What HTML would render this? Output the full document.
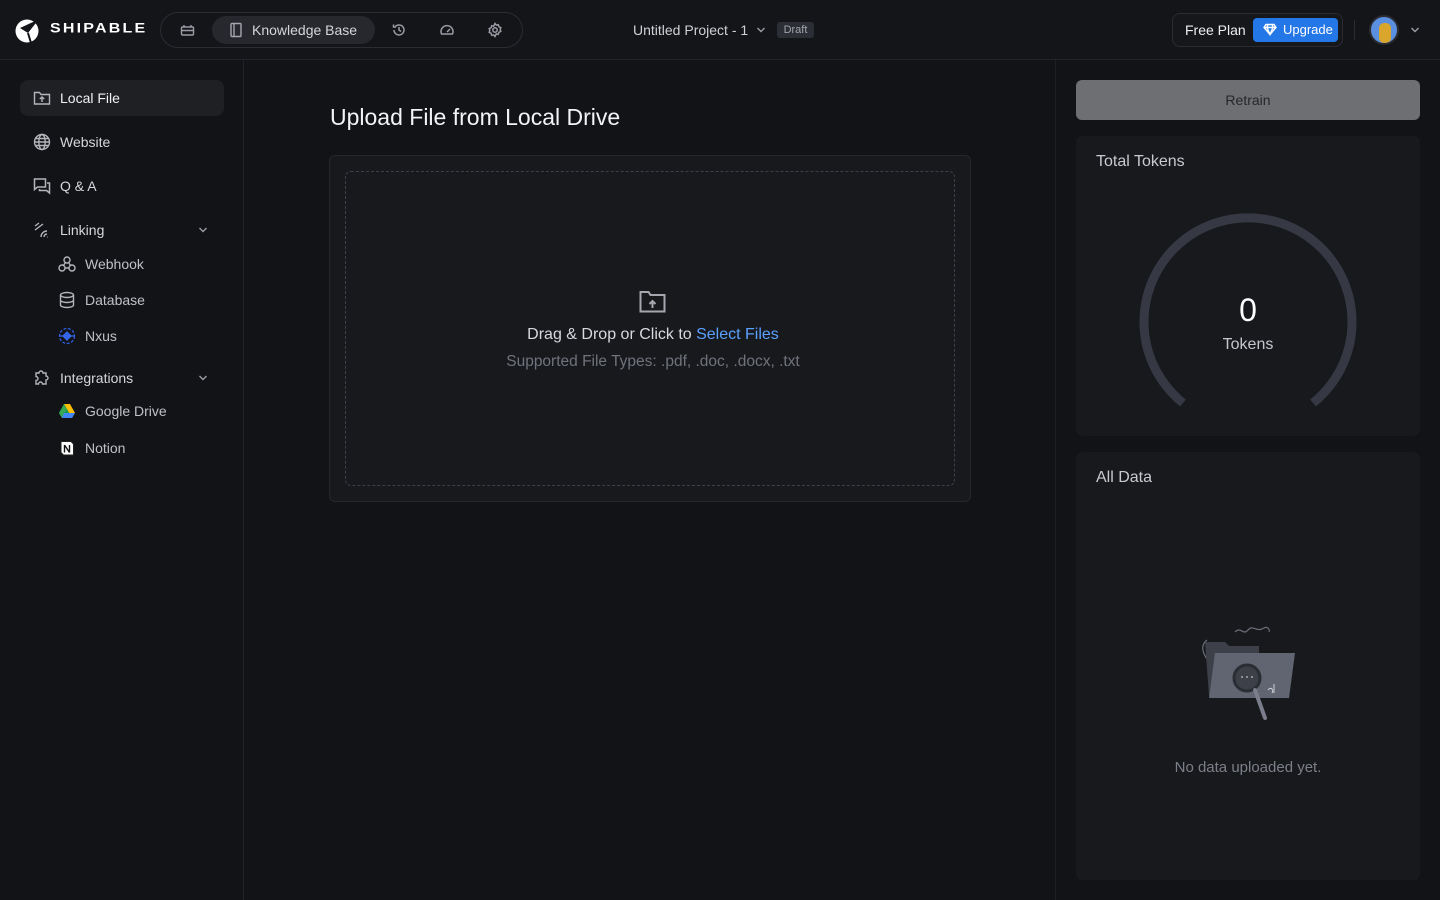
<!DOCTYPE html>
<html><head><meta charset="utf-8"><style>
*{box-sizing:border-box;margin:0;padding:0}
body{width:1440px;height:900px;background:#121316;font-family:"Liberation Sans",sans-serif;color:#e4e5e9;position:relative;overflow:hidden}
.abs{position:absolute}
.hdr{left:0;top:0;width:1440px;height:60px;border-bottom:1px solid #22242a;background:#141519}
.side{left:0;top:60px;width:244px;height:840px;border-right:1px solid #202227}
.right{left:1055px;top:60px;width:385px;height:840px;border-left:1px solid #1c1e22}
.nav{position:absolute;left:20px;width:204px;height:36px;border-radius:8px;display:flex;align-items:center;padding-left:13px;font-size:14px;color:#d6d7dc}
.nav svg{margin-right:9px}
.sub{position:absolute;left:58px;display:flex;align-items:center;font-size:14px;color:#bfc1c8}
.sub svg{margin-right:9px}
.chev{position:absolute;left:198px}
</style></head><body>
<div class="abs hdr"></div>
<svg class="abs" style="left:14px;top:16px" width="28" height="28" viewBox="0 0 28 28"><circle cx="13" cy="15" r="11.5" fill="#fff"/><path d="M6 12 L14 17 L25 3 L19 6 Z" fill="#141519"/><path d="M14 17 L17 27" stroke="#141519" stroke-width="2"/></svg>
<div class="abs" style="left:50px;top:20px;font-size:16px;font-weight:900;letter-spacing:2.2px;color:#fff;transform:scaleY(0.85);transform-origin:left center">SHIPABLE</div>
<div class="abs" style="left:160px;top:12px;width:363px;height:36px;border:1px solid #2a2c32;border-radius:18px"></div>
<svg class="abs" style="left:180px;top:23px" width="15" height="14" viewBox="0 0 15 14" fill="none" stroke="#9a9ca4" stroke-width="1.4"><rect x="1.5" y="4" width="12" height="8" rx="1"/><path d="M4 4V2M11 4V2M1.5 7.5h12"/></svg>
<div class="abs" style="left:212px;top:16px;width:163px;height:28px;background:#26282e;border-radius:14px"></div>
<svg class="abs" style="left:229px;top:22px" width="14" height="16" viewBox="0 0 14 16" fill="none" stroke="#a5a7ae" stroke-width="1.4"><rect x="2" y="1.5" width="10" height="13" rx="1"/><path d="M5 1.5v13"/></svg>
<div class="abs" style="left:252px;top:22px;font-size:14px;color:#d4d5da">Knowledge Base</div>
<svg class="abs" style="left:391px;top:22px" width="16" height="16" viewBox="0 0 16 16" fill="none" stroke="#9a9ca4" stroke-width="1.5"><path d="M3 8a5 5 0 1 0 1.5-3.6M2.5 2.5v2.5h2.5M8 5v3l2 1.5"/></svg>
<svg class="abs" style="left:439px;top:22px" width="16" height="16" viewBox="0 0 16 16" fill="none" stroke="#9a9ca4" stroke-width="1.5"><path d="M2.5 12a6 6 0 1 1 11 0z"/><path d="M8 10l3-3"/></svg>
<svg class="abs" style="left:487px;top:22px" width="16" height="16" viewBox="0 0 16 16" fill="none" stroke="#9a9ca4" stroke-width="1.5"><circle cx="8" cy="8" r="2.2"/><path d="M8 1.5l1.3 1.6 2-.4.6 2 1.9.9-.6 1.9.6 1.9-1.9.9-.6 2-2-.4L8 14.5l-1.3-1.6-2 .4-.6-2-1.9-.9.6-1.9-.6-1.9 1.9-.9.6-2 2 .4z"/></svg>
<div class="abs" style="left:633px;top:22px;font-size:14px;color:#d0d1d6">Untitled Project - 1</div>
<svg class="abs" style="left:756px;top:26px" width="10" height="8" viewBox="0 0 10 8" fill="none" stroke="#9a9ca4" stroke-width="1.4"><path d="M1.5 2l3.5 3.5L8.5 2"/></svg>
<div class="abs" style="left:777px;top:22px;width:37px;height:16px;background:#2c2e35;border-radius:3px;font-size:11px;color:#a2a4ac;text-align:center;line-height:16px">Draft</div>
<div class="abs" style="left:1172px;top:13px;width:171px;height:34px;border:1px solid #2a2c32;border-radius:8px;background:#16171b"></div>
<div class="abs" style="left:1185px;top:22px;font-size:14px;color:#eceef2">Free Plan</div>
<div class="abs" style="left:1253px;top:18px;width:85px;height:24px;background:#2477e6;border-radius:4px;color:#fff;font-size:13px;line-height:24px;padding-left:30px">Upgrade</div>
<svg class="abs" style="left:1263px;top:23px" width="14" height="13" viewBox="0 0 14 13" fill="none" stroke="#fff" stroke-width="1.4"><path d="M3 1.5h8l2 3-6 7-6-7zM1 4.5h12M5 1.5l-1 3 3 7 3-7-1-3"/></svg>
<div class="abs" style="left:1354px;top:20px;width:1px;height:20px;background:#2a2c32"></div>
<div class="abs" style="left:1369px;top:15px;width:30px;height:30px;border-radius:50%;background:#5b8fe0;border:2px solid #2a2c32;overflow:hidden"><div style="position:absolute;left:8px;top:6px;width:12px;height:20px;background:#d9a52a;border-radius:5px"></div></div>
<svg class="abs" style="left:1410px;top:26px" width="10" height="8" viewBox="0 0 10 8" fill="none" stroke="#9a9ca4" stroke-width="1.4"><path d="M1.5 2l3.5 3.5L8.5 2"/></svg>

<div class="abs side"></div>
<div class="nav" style="top:80px;background:#1e2024;color:#f0f1f4"><svg width="18" height="16" viewBox="0 0 18 16" fill="none" stroke="#b3b5bc" stroke-width="1.4"><path d="M1.5 2.5h5l1.5 2h8.5v9.5h-15z"/><path d="M9 12V7M6.8 9L9 7l2.2 2"/></svg>Local File</div>
<div class="nav" style="top:124px"><svg width="18" height="18" viewBox="0 0 18 18" fill="none" stroke="#b3b5bc" stroke-width="1.4"><circle cx="9" cy="9" r="7.5"/><ellipse cx="9" cy="9" rx="3.2" ry="7.5"/><path d="M1.5 9h15M2.5 5.5h13M2.5 12.5h13"/></svg>Website</div>
<div class="nav" style="top:168px"><svg width="18" height="18" viewBox="0 0 18 18" fill="none" stroke="#b3b5bc" stroke-width="1.5"><path d="M1.5 2h11v8h-8l-3 2.5z"/><path d="M14 6h2.5v10l-3-2.5h-7v-1.5"/></svg>Q &amp; A</div>
<div class="nav" style="top:212px"><svg width="18" height="18" viewBox="0 0 18 18" fill="none" stroke="#b3b5bc" stroke-width="1.4"><path d="M2 5l4-3M2 9l8-6M8 16a6 6 0 0 1 6-6M11 16a3 3 0 0 1 3-3M14 16h.5"/></svg>Linking</div>
<svg class="chev" style="top:226px" width="10" height="8" viewBox="0 0 10 8" fill="none" stroke="#9a9ca4" stroke-width="1.4"><path d="M1.5 2l3.5 3.5L8.5 2"/></svg>
<div class="sub" style="top:255px"><svg width="18" height="18" viewBox="0 0 18 18" fill="none" stroke="#b3b5bc" stroke-width="1.4"><circle cx="9" cy="5" r="3"/><circle cx="4" cy="13" r="3"/><circle cx="14" cy="13" r="3"/><path d="M7.5 7.5L5 11M10.5 7.5L13 11M7 13h4"/></svg>Webhook</div>
<div class="sub" style="top:291px"><svg width="18" height="18" viewBox="0 0 18 18" fill="none" stroke="#b3b5bc" stroke-width="1.4"><ellipse cx="9" cy="4" rx="6.5" ry="2.5"/><path d="M2.5 4v10c0 1.4 2.9 2.5 6.5 2.5s6.5-1.1 6.5-2.5V4M2.5 9c0 1.4 2.9 2.5 6.5 2.5s6.5-1.1 6.5-2.5"/></svg>Database</div>
<div class="sub" style="top:327px"><svg width="18" height="18" viewBox="0 0 18 18"><circle cx="9" cy="9" r="7.5" fill="none" stroke="#2f5de0" stroke-width="1.3" stroke-dasharray="3 1.5"/><path d="M2 9h14M9 5l-4 4 4 4 4-4z" stroke="#3a6cf0" fill="#2f5de0" stroke-width="1.2"/></svg>Nxus</div>
<div class="nav" style="top:360px"><svg width="18" height="18" viewBox="0 0 18 18" fill="none" stroke="#b3b5bc" stroke-width="1.4"><path d="M3 4h3a2 2 0 1 1 4 0h3v3a2 2 0 1 1 0 4v4H9.5a2 2 0 1 0-4 0H3v-3.5a2 2 0 1 0 0-4z"/></svg>Integrations</div>
<svg class="chev" style="top:374px" width="10" height="8" viewBox="0 0 10 8" fill="none" stroke="#9a9ca4" stroke-width="1.4"><path d="M1.5 2l3.5 3.5L8.5 2"/></svg>
<div class="sub" style="top:403px"><svg width="18" height="16" viewBox="0 0 18 16"><path d="M6 1h6l5 9h-6z" fill="#fbbc04"/><path d="M6 1l5 9-3 5-7-5z" fill="#0f9d58"/><path d="M1 10h16l-3 5H4z" fill="#4285f4"/><path d="M6 1l-5 9 3 5 5-9z" fill="#34a853"/><path d="M11 10h6l-3 5H4l2-5z" fill="#4285f4"/></svg>Google Drive</div>
<div class="sub" style="top:439px"><svg width="18" height="18" viewBox="0 0 18 18"><path d="M3 2.5h10l2.5 2.5v11H5.5L3 13.5z" fill="#fff" stroke="#222" stroke-width="1"/><path d="M6.5 6v7.5M6.5 6l5 7.5M11.5 6v7.5" stroke="#111" stroke-width="1.4" fill="none"/></svg>Notion</div>

<div class="abs" style="left:330px;top:104px;font-size:23px;color:#f2f3f5">Upload File from Local Drive</div>
<div class="abs" style="left:329px;top:155px;width:642px;height:347px;background:#17191d;border:1px solid #25272c;border-radius:6px"></div>
<div class="abs" style="left:345px;top:171px;width:610px;height:315px;border:1px dashed #3d4048;border-radius:6px"></div>
<svg class="abs" style="left:639px;top:290px" width="28" height="24" viewBox="0 0 28 24" fill="none" stroke="#a5a7ae" stroke-width="2"><path d="M1.5 2h8l2 3h14v16.5h-24z"/><path d="M13.5 18v-7M10.5 14l3-3 3 3"/></svg>
<div class="abs" style="left:345px;top:326px;width:616px;text-align:center;font-size:16px;color:#d8d9de">Drag &amp; Drop or Click to <span style="color:#5aa1ff">Select Files</span></div>
<div class="abs" style="left:345px;top:353px;width:616px;text-align:center;font-size:15.5px;color:#70737c">Supported File Types: .pdf, .doc, .docx, .txt</div>

<div class="abs right"></div>
<div class="abs" style="left:1076px;top:80px;width:344px;height:40px;background:#6e6f72;border-radius:6px;text-align:center;line-height:40px;font-size:14px;color:#26272b">Retrain</div>
<div class="abs" style="left:1076px;top:136px;width:344px;height:300px;background:#17191d;border-radius:6px"></div>
<div class="abs" style="left:1096px;top:153px;font-size:16px;color:#c8cad0">Total Tokens</div>
<svg class="abs" style="left:1076px;top:136px" width="344" height="300" viewBox="1076 136 344 300"><path d="M1183 403 A104 104 0 1 1 1313 403" fill="none" stroke="#363944" stroke-width="9"/></svg>
<div class="abs" style="left:1148px;top:292px;width:200px;text-align:center;font-size:32px;color:#fff">0</div>
<div class="abs" style="left:1148px;top:336px;width:200px;text-align:center;font-size:16px;color:#c5c7cd">Tokens</div>
<div class="abs" style="left:1076px;top:452px;width:344px;height:428px;background:#17191d;border-radius:6px"></div>
<div class="abs" style="left:1096px;top:469px;font-size:16px;color:#c8cad0">All Data</div>
<svg class="abs" style="left:1195px;top:620px" width="110" height="110" viewBox="0 0 110 110"><path d="M40 12c6-6 8 4 13-2s8 3 16-2c4-2 6 2 5 4" fill="none" stroke="#6b6e78" stroke-width="1.2"/><path d="M12 20c-10 8 0 20 6 26" fill="none" stroke="#6b6e78" stroke-width="1.2"/><path d="M10 22h20l4 4h30v50H14z" fill="#3e4049"/><path d="M20 33h80l-6 45H14z" fill="#616471"/><circle cx="52" cy="58" r="13" fill="#3e4049" stroke="#2b2d34" stroke-width="3"/><path d="M60 70l10 28" stroke="#7b7e8a" stroke-width="4" stroke-linecap="round"/><circle cx="47" cy="57" r="1" fill="#aaa"/><circle cx="52" cy="57" r="1" fill="#aaa"/><circle cx="57" cy="57" r="1" fill="#aaa"/><path d="M73 70c3-4 6 0 4 3M79 64v9" stroke="#cfd1d8" stroke-width="1" fill="none"/></svg>
<div class="abs" style="left:1076px;top:759px;width:344px;text-align:center;font-size:15px;color:#7c7f88">No data uploaded yet.</div>
</body></html>
